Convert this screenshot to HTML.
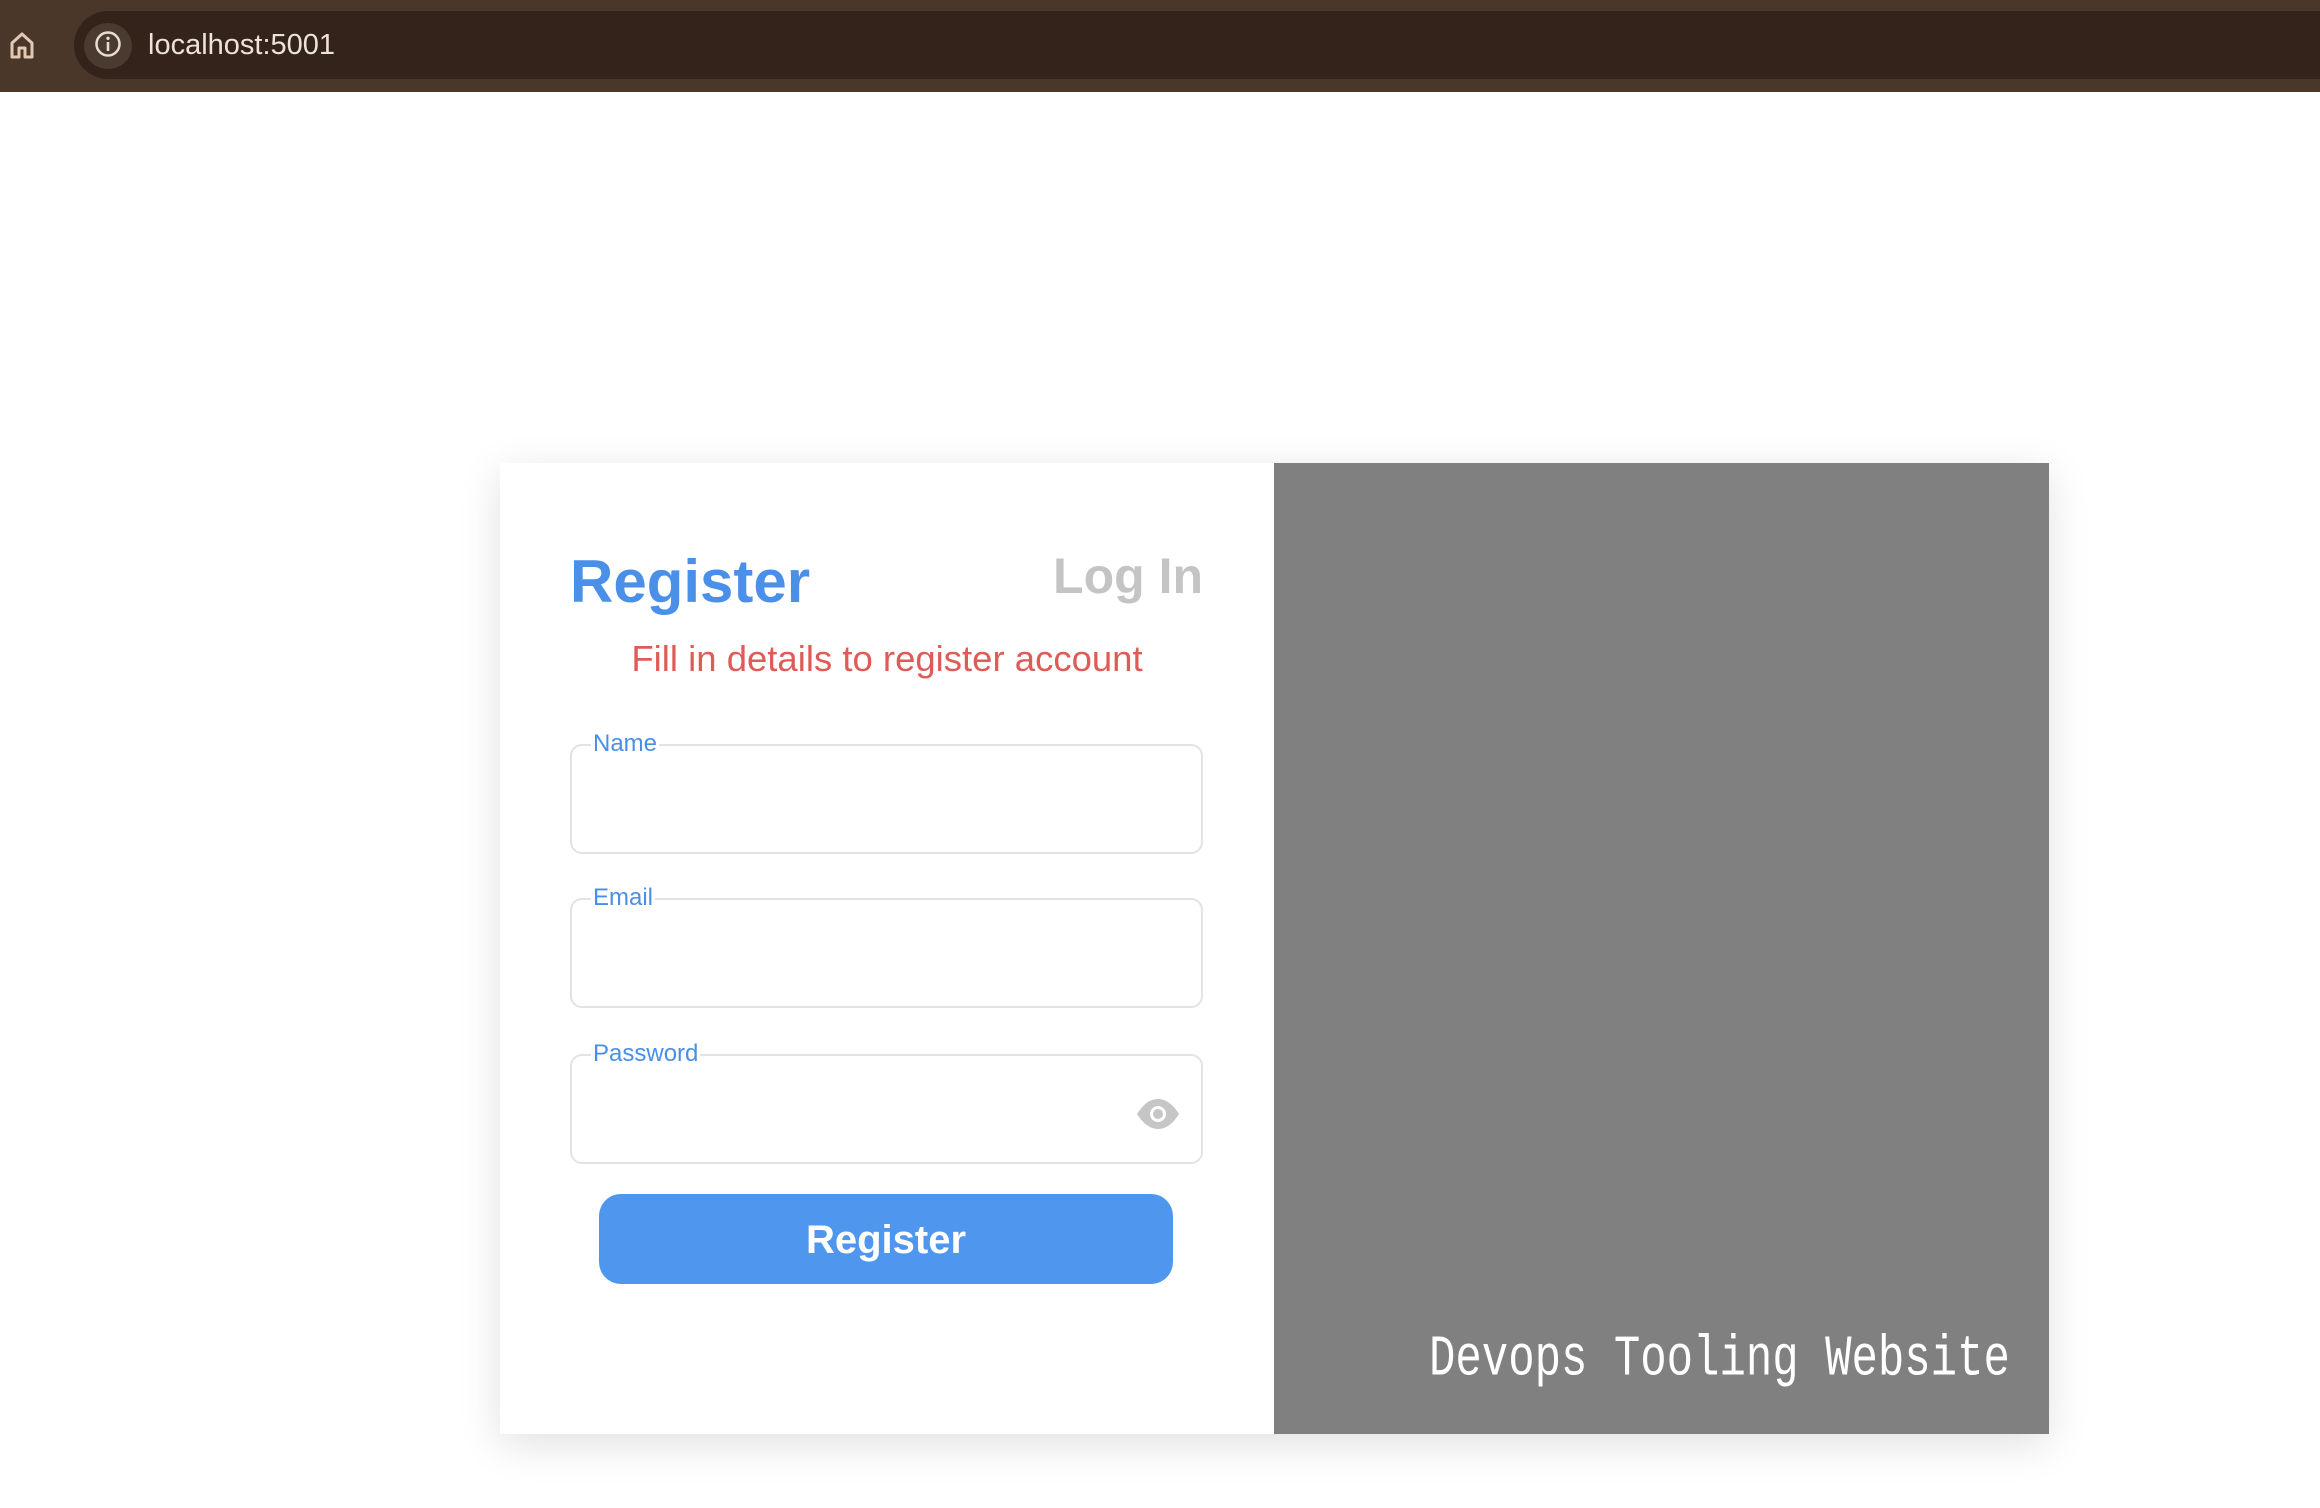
<!DOCTYPE html>
<html><head><meta charset="utf-8"><style>
*{margin:0;padding:0;box-sizing:border-box}
html,body{width:2320px;height:1508px;overflow:hidden;background:#fff;font-family:"Liberation Sans",Arial,sans-serif}
.bar{position:absolute;left:0;top:0;width:2320px;height:92px;background:#4a3729}
.pill{position:absolute;left:74px;top:11px;width:2300px;height:68px;background:#34231a;border-radius:34px}
.info{position:absolute;left:84px;top:23px;width:48px;height:46px;border-radius:50%;background:#4a3a2f}
.url{position:absolute;left:148px;top:29px;font-size:29px;color:#ece2da}
.card{position:absolute;left:500px;top:463px;width:1549px;height:971px;background:#fff;box-shadow:0 10px 40px rgba(0,0,0,.12)}
.right{position:absolute;left:774px;top:0;width:775px;height:971px;background:#808080}
.t{position:absolute;white-space:nowrap}
.box{position:absolute;left:70px;width:633px;height:110px;border:2px solid #e3e3e3;border-radius:12px}
.lbl{position:absolute;left:19px;top:-17px;background:#fff;padding:0 2px;font-size:24px;color:#4a8fe7;line-height:30px}
.btn{position:absolute;left:99px;top:731px;width:574px;height:90px;background:#4f96ee;border-radius:22px;color:#fff;font-weight:bold;font-size:40px;text-align:center;line-height:92px}
.mono{position:absolute;left:929px;top:882px;font-family:"Liberation Mono",monospace;font-size:44px;color:#fff;transform:scaleY(1.3);transform-origin:left bottom;line-height:44px}
</style></head><body>
<div class="bar">
<div class="pill"></div>
<svg style="position:absolute;left:9px;top:31px" width="26" height="28" viewBox="0 0 26 28"><path d="M3 26V12L13 3L23 12V26H16V17H10V26Z" fill="none" stroke="#e3c8b4" stroke-width="3" stroke-linejoin="round"/></svg>
<div class="info"></div>
<svg style="position:absolute;left:94px;top:30px" width="28" height="28" viewBox="0 0 28 28"><circle cx="14" cy="14" r="11.5" fill="none" stroke="#e6dcd4" stroke-width="2.5"/><rect x="12.7" y="12" width="2.6" height="9" fill="#e6dcd4"/><circle cx="14" cy="8.3" r="1.7" fill="#e6dcd4"/></svg>
<div class="url">localhost:5001</div>
</div>
<div class="card">
<div class="t" style="left:70px;top:84px;font-size:60px;font-weight:bold;color:#4a90e9">Register</div>
<div class="t" style="right:846px;top:84px;font-size:50px;font-weight:bold;color:#c4c4c4">Log In</div>
<div class="t" style="left:0;width:774px;text-align:center;top:175px;font-size:36.5px;color:#df5b57">Fill in details to register account</div>
<div class="box" style="top:281px"><div class="lbl">Name</div></div>
<div class="box" style="top:435px"><div class="lbl">Email</div></div>
<div class="box" style="top:591px"><div class="lbl">Password</div>
<svg style="position:absolute;left:564px;top:42px" width="44" height="32" viewBox="0 0 44 32"><path d="M1 16C8 5 15 1 22 1S36 5 43 16C36 27 29 31 22 31S8 27 1 16Z" fill="#c6c6c6"/><circle cx="22" cy="16" r="8" fill="#fff"/><circle cx="22" cy="16" r="5" fill="#c6c6c6"/></svg>
</div>
<div class="btn">Register</div>
<div class="right"></div>
<div class="mono">Devops Tooling Website</div>
</div>
</body></html>
